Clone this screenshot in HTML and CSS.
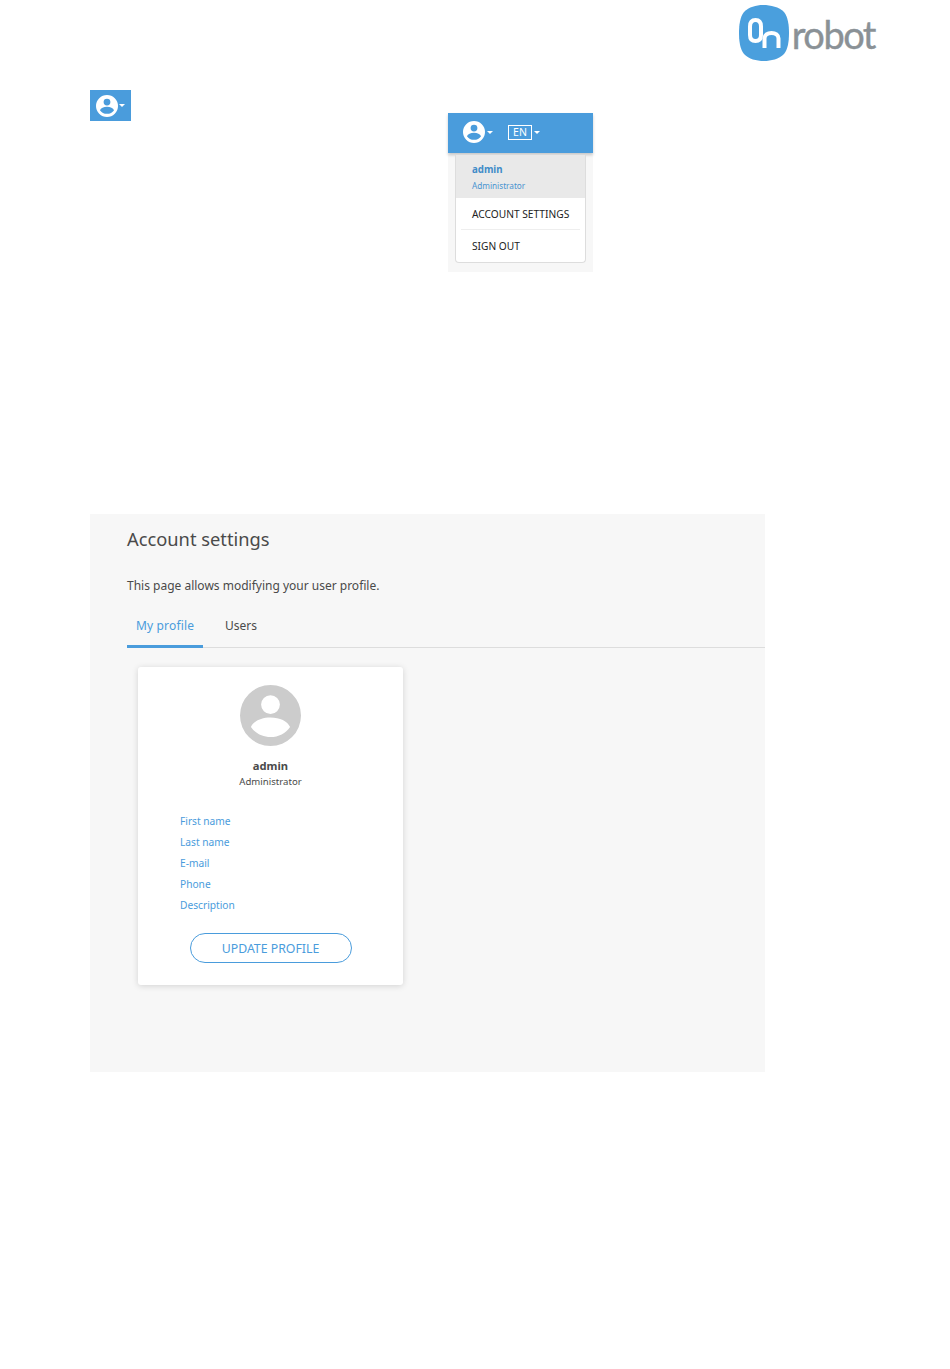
FILE: index.html
```html
<!DOCTYPE html>
<html lang="en">
<head>
<meta charset="utf-8">
<title>Account settings</title>
<link rel="stylesheet" href="styles.css">
</head>
<body>
<header class="doc-header">
  <div class="logo">
    <svg class="logo-mark" viewBox="0 0 50 56" width="50" height="56" aria-hidden="true">
      <path class="logo-blob" d="M24 0C32 0 40 2 45 7C49 12 50 20 50 28C50 36 49 44 45 49C40 54 32 56 25 56C17 56 10 54 5 49C1 44 0 36 0 28C0 20 1 12 5 7C10 2 17 0 24 0Z"/>
      <path class="logo-line" d="M11 21.500C11 17 13 15 16.500 15C20 15 22 17 22 21.500V30C22 34 20 36 16.500 36C13 36 11 34 11 30Z"/>
      <path class="logo-line" d="M25.500 43V33.500C25.500 30 28.500 28 32.500 28C36.500 28 39.500 30 39.500 33.500V43"/>
    </svg>
    <span class="logo-word">robot</span>
  </div>
</header>

<main class="page">
  <section class="shots">
    <div class="icon-button">
      <svg class="user-icon" viewBox="0 0 24 24" width="22" height="22" aria-hidden="true"><use href="#user"/></svg>
      <span class="caret"></span>
    </div>

    <div class="menu-shot">
      <div class="menu-bar">
        <svg class="user-icon" viewBox="0 0 24 24" width="22" height="22" aria-hidden="true">
          <defs>
            <g id="user">
              <path fill-rule="evenodd" d="M12 0a12 12 0 1 0 0 24a12 12 0 0 0 0-24ZM12 4a3.700 3.700 0 1 1 0 7.400a3.700 3.700 0 0 1 0-7.400ZM12 12.800c3.700 0 6.700 1.500 7.700 3.700c-1.700 2.500-4.500 4-7.700 4s-6-1.500-7.700-4c1-2.200 4-3.700 7.700-3.700Z"/>
            </g>
          </defs>
          <use href="#user"/>
        </svg>
        <span class="caret"></span>
        <span class="lang">EN</span>
        <span class="caret"></span>
      </div>
      <div class="menu">
        <div class="menu-user">
          <div class="menu-user-name">admin</div>
          <div class="menu-user-role">Administrator</div>
        </div>
        <div class="menu-item menu-item-first">ACCOUNT SETTINGS</div>
        <div class="menu-item">SIGN OUT</div>
      </div>
    </div>
  </section>

  <section class="panel">
    <h1 class="panel-title">Account settings</h1>
    <p class="panel-intro">This page allows modifying your user profile.</p>
    <nav class="tabs">
      <span class="tab tab-active">My profile</span>
      <span class="tab">Users</span>
    </nav>
    <article class="card">
      <svg class="avatar" viewBox="0 0 24 24" width="61" height="61" aria-hidden="true"><use href="#user"/></svg>
      <div class="card-name">admin</div>
      <div class="card-role">Administrator</div>
      <ul class="fields">
        <li>First name</li>
        <li>Last name</li>
        <li>E-mail</li>
        <li>Phone</li>
        <li>Description</li>
      </ul>
      <button class="update" type="button">UPDATE PROFILE</button>
    </article>
  </section>
</main>
</body>
</html>
```

FILE: styles.css
```css
* { box-sizing: border-box; }

html, body { margin: 0; padding: 0; background: #fff; }

body {
  width: 950px;
  height: 1369px;
  overflow: hidden;
  font-family: "Noto Sans", "Open Sans", sans-serif;
  color: #4a4a4a;
}

/* document header with logo */
.doc-header {
  height: 90px;
  padding: 5px 75px 0 0;
  display: flex;
  justify-content: flex-end;
}
.logo { display: flex; align-items: flex-start; height: 56px; }
.logo-mark { display: block; }
.logo-blob { fill: #4a9fdd; }
.logo-line { fill: none; stroke: #fff; stroke-width: 4; stroke-linecap: butt; }
.logo-word {
  margin-left: 3px;
  margin-top: 6px;
  font-family: Lato, sans-serif;
  font-size: 38px;
  line-height: 46px;
  letter-spacing: -1.500px;
  color: #8a9196;
  -webkit-text-stroke: .4px #8a9196;
}

/* page column */
.page { padding-left: 90px; }

.shots { display: flex; align-items: flex-start; height: 182px; }

.user-icon { fill: #fff; display: block; }
.caret {
  display: block;
  width: 0;
  height: 0;
  border-left: 3px solid transparent;
  border-right: 3px solid transparent;
  border-top: 3px solid #fff;
}

.icon-button {
  width: 41px;
  height: 31px;
  background: #4a9cdc;
  display: flex;
  align-items: center;
  padding-left: 6px;
  gap: 1px;
}

.menu-shot {
  width: 145px;
  height: 159px;
  margin: 23px 0 0 317px;
  background: #f7f7f7;
}
.menu-bar {
  height: 40px;
  padding: 0 0 2px 15px;
  background: #4a9cdc;
  box-shadow: 0 2px 3px rgba(0, 0, 0, .2);
  display: flex;
  align-items: center;
}
.menu-bar .user-icon { margin-right: 2px; }
.lang {
  margin: 0 2px 0 15px;
  width: 24px;
  height: 15px;
  border: 1px solid #fff;
  color: #fff;
  font-size: 10.500px;
  line-height: 13px;
  text-align: center;
}

.menu {
  width: 131px;
  height: 108px;
  margin: 2px 0 0 7px;
  background: #fff;
  border: 1px solid #ddd;
  border-top: 0;
  border-radius: 0 0 4px 4px;
}
.menu-user {
  height: 43px;
  padding: 8px 16px 0;
  background: #e9e9e9;
}
.menu-user-name {
  font-size: 9.700px;
  line-height: 13px;
  font-weight: 700;
  color: #3f8cc8;
}
.menu-user-role {
  margin-top: 3px;
  font-size: 8.200px;
  line-height: 13px;
  color: #4a94d0;
}
.menu-item {
  margin: 0 5px;
  height: 32px;
  padding-left: 11px;
  font-size: 10.200px;
  line-height: 32px;
  color: #222;
  white-space: nowrap;
}
.menu-item-first { border-bottom: 1px solid #eee; }

/* settings panel */
.panel {
  width: 675px;
  height: 558px;
  margin-top: 242px;
  padding-top: 12px;
  background: #f7f7f7;
}
.panel-title {
  margin: 0 0 0 37px;
  font-size: 18.300px;
  line-height: 26px;
  font-weight: 400;
}
.panel-intro {
  margin: 25px 0 0 37px;
  font-size: 12px;
  line-height: 18px;
}
.tabs {
  display: flex;
  margin: 9px 0 0 37px;
  height: 44px;
  border-bottom: 1px solid #ddd;
}
.tab {
  height: 44px;
  padding: 13px 9px 0;
  margin-right: 13px;
  font-size: 12px;
  line-height: 18px;
  white-space: nowrap;
}
.tab-active {
  width: 76px;
  color: #4a9cdc;
  letter-spacing: .15px;
  border-bottom: 3px solid #4a9cdc;
}

.card {
  width: 265px;
  height: 318px;
  margin: 19px 0 0 48px;
  padding-top: 18px;
  background: #fff;
  border-radius: 3px;
  box-shadow: 0 1px 6px rgba(0, 0, 0, .15);
  text-align: center;
}
.avatar { display: block; margin: 0 auto; fill: #ccc; }
.card-name {
  margin-top: 13px;
  font-size: 11.200px;
  line-height: 14px;
  font-weight: 700;
}
.card-role {
  margin-top: 2px;
  font-size: 9.600px;
  line-height: 14px;
}
.fields {
  list-style: none;
  margin: 22px 0 0;
  padding: 0 0 0 42px;
  text-align: left;
  font-size: 10.200px;
  line-height: 21px;
  color: #4a9cdc;
}
.update {
  display: block;
  width: 162px;
  height: 30px;
  margin: 17px auto 0;
  padding: 0;
  background: #fff;
  border: 1px solid #4a9cdc;
  border-radius: 15px;
  color: #4a9cdc;
  font-family: inherit;
  font-size: 12.300px;
}
```
